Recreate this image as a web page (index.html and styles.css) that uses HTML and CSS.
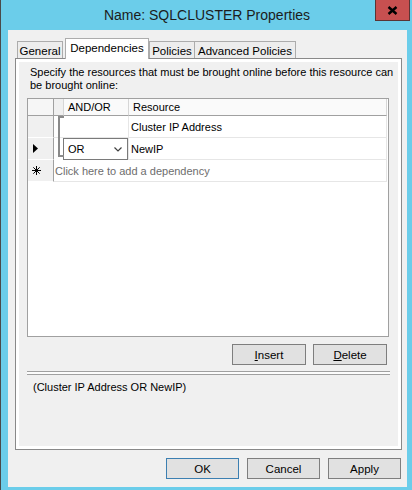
FILE: index.html
```html
<!DOCTYPE html>
<html>
<head>
<meta charset="utf-8">
<title>Name: SQLCLUSTER Properties</title>
<link rel="stylesheet" href="styles.css">
</head>
<body>
<div class="window">
  <div class="titlebar">
    <span class="title">Name: SQLCLUSTER Properties</span>
    <div class="close">
      <svg width="11" height="9" viewBox="0 0 11 9"><path d="M1.5 1 L9.5 8 M9.5 1 L1.5 8" stroke="#000" stroke-width="2.4" fill="none"/></svg>
    </div>
  </div>
  <div class="client">
    <div class="tabs">
      <div class="tab t-general">General</div>
      <div class="tab t-dep active">Dependencies</div>
      <div class="tab t-pol">Policies</div>
      <div class="tab t-adv">Advanced Policies</div>
    </div>
    <div class="panel">
      <p class="intro">Specify the resources that must be brought online before this resource can<br>be brought online:</p>
      <div class="grid">
        <div class="row head">
          <div class="rh"></div>
          <div class="hb"></div>
          <div class="c-andor">AND/OR</div>
          <div class="c-res">Resource</div>
        </div>
        <div class="row">
          <div class="rh"></div>
          <div class="c-merge"></div>
          <div class="c-res">Cluster IP Address</div>
        </div>
        <div class="row">
          <div class="rh"><svg width="6" height="9" viewBox="0 0 6 9"><path d="M0 0 L5 4.5 L0 9 Z" fill="#000"/></svg></div>
          <div class="c-merge nob">
            <div class="combo"><span>OR</span><svg width="8" height="5" viewBox="0 0 8 5"><path d="M0.5 0.5 L4 4 L7.5 0.5" stroke="#404040" stroke-width="1.2" fill="none"/></svg></div>
          </div>
          <div class="c-res">NewIP</div>
        </div>
        <div class="row">
          <div class="rh star"><svg width="9" height="9" viewBox="0 0 9 9"><path d="M4.5 0 V9 M0 4.5 H9 M1.3 1.3 L7.7 7.7 M7.7 1.3 L1.3 7.7" stroke="#000" stroke-width="1" fill="none"/></svg></div>
          <div class="c-new">Click here to add a dependency</div>
        </div>
        <div class="bracket"></div>
      </div>
      <div class="actions">
        <button class="btn"><u>I</u>nsert</button>
        <button class="btn"><u>D</u>elete</button>
      </div>
      <div class="sep"></div>
      <p class="desc">(Cluster IP Address OR NewIP)</p>
    </div>
    <div class="footer">
      <button class="btn default">OK</button>
      <button class="btn">Cancel</button>
      <button class="btn">Apply</button>
    </div>
  </div>
</div>
</body>
</html>
```
FILE: styles.css
```css
html, body {
  margin: 0;
  padding: 0;
}
body {
  width: 412px;
  height: 490px;
  overflow: hidden;
  background: #6bcdea;
  font-family: "Liberation Sans", Arial, sans-serif;
  font-size: 11px;
  color: #000;
}
.window {
  height: 490px;
  border-left: 1px solid #4a4a4a;
  box-sizing: border-box;
  position: relative;
}
.titlebar {
  height: 30px;
  display: flex;
  align-items: center;
  justify-content: center;
}
.title {
  font-size: 14px;
  color: #1c1c1c;
  margin-left: 1px;
}
.close {
  position: absolute;
  top: 0;
  right: 2px;
  width: 35px;
  height: 21px;
  box-sizing: border-box;
  background: #c75050;
  border: 1px solid #5a3434;
  border-top: none;
  display: flex;
  align-items: center;
  justify-content: center;
}
.client {
  margin-left: 7px;
  width: 399px;
  height: 457px;
  background: #f0f0f0;
  display: flex;
  flex-direction: column;
}
.tabs {
  height: 28px;
  display: flex;
  align-items: flex-end;
  padding-left: 9px;
  position: relative;
  z-index: 1;
  box-sizing: border-box;
}
.tab {
  height: 17px;
  box-sizing: border-box;
  border: 1px solid #acacac;
  border-bottom: none;
  background: #ededed;
  display: flex;
  align-items: center;
  justify-content: center;
  padding-top: 1px;
  font-size: 11.5px;
}
.t-general { width: 46px; margin-right: 2px; }
.t-dep { width: 84px; }
.t-pol { width: 46px; }
.t-adv { width: 101px; border-left: none; }
.tab.active {
  height: 21px;
  margin-bottom: -1px;
  background: #fff;
  border-color: #acacac;
  padding-top: 0;
  padding-bottom: 2px;
}
.panel {
  margin-left: 7px;
  width: 387px;
  height: 392px;
  box-sizing: border-box;
  border: 1px solid #898989;
  box-shadow: inset 0 0 0 3px #fff;
  background: #f0f0f0;
  padding: 7px 12px 0 11px;
  display: flex;
  flex-direction: column;
}
.intro {
  margin: 0;
  padding-left: 3px;
  line-height: 13px;
  white-space: nowrap;
}
.grid {
  margin-top: 6px;
  height: 239px;
  box-sizing: border-box;
  border: 1px solid #a0a0a0;
  background: #fff;
  position: relative;
}
.row {
  display: flex;
  height: 22px;
}
.row.head {
  height: 17px;
}
.row > div {
  box-sizing: border-box;
  display: flex;
  align-items: center;
}
.rh {
  width: 26px;
  flex: none;
  background: #f0f0f0;
  border-right: 1px solid #a0a0a0;
  border-bottom: 1px solid #fff;
  padding-left: 5px;
}
.rh.star {
  padding-left: 4px;
}
.head > div {
  background: #fafafa;
  border-bottom: 1px solid #a0a0a0;
}
.head .rh {
  background: #f6f6f6;
}
.hb {
  width: 10px;
  flex: none;
  border-right: 1px solid #d6d6d6;
  background: #f0f0f0 !important;
}
.c-andor {
  width: 65px;
  flex: none;
  border-right: 1px solid #d6d6d6;
  padding-left: 4px;
}
.c-res {
  flex: 1;
  margin-right: 1px;
  border-right: 1px solid #e6e6e6;
  border-bottom: 1px solid #e6e6e6;
  padding-left: 2px;
}
.head .c-res {
  padding-left: 4px;
  border-right-color: #d6d6d6;
}
.c-merge {
  width: 75px;
  flex: none;
  border-right: 1px solid #e6e6e6;
  border-bottom: 1px solid #e6e6e6;
  padding-left: 9px;
}
.c-merge.nob {
  border-bottom: none;
  align-items: stretch !important;
}
.combo {
  width: 65px;
  height: 22px;
  box-sizing: border-box;
  border: 1px solid #7a7a7a;
  background: #fff;
  display: flex;
  align-items: center;
  justify-content: space-between;
  padding: 0 5px 0 4px;
}
.combo svg {
  margin-top: 1px;
}
.c-new {
  flex: 1;
  margin-right: 1px;
  border-right: 1px solid #e6e6e6;
  border-bottom: 1px solid #e6e6e6;
  padding-left: 1px;
  color: #6d6d6d;
}
.bracket {
  position: absolute;
  left: 30px;
  top: 17px;
  width: 6px;
  height: 41px;
  box-sizing: border-box;
  border: 2px solid #8a8a8a;
  border-right: none;
}
.actions {
  display: flex;
  justify-content: flex-end;
  gap: 7px;
  margin-top: 7px;
  padding-right: 2px;
}
.btn {
  width: 74px;
  height: 21px;
  box-sizing: border-box;
  margin: 0;
  padding: 0;
  background: #e1e1e1;
  border: 1px solid #7e7e7e;
  font-family: "Liberation Sans", Arial, sans-serif;
  font-size: 11.5px;
  color: #000;
}
.btn u {
  text-decoration-thickness: 1px;
}
.sep {
  margin-top: 6px;
  margin-right: -1px;
  height: 4px;
  box-sizing: border-box;
  border-top: 1px solid #a0a0a0;
  border-bottom: 1px solid #a0a0a0;
  background: #fcfcfc;
}
.desc {
  margin: 6px 0 0;
  padding-left: 6px;
  line-height: 13px;
}
.footer {
  display: flex;
  justify-content: flex-end;
  gap: 8px;
  padding: 8px 6px 0 0;
}
.footer .btn {
  width: 73px;
}
.btn.default {
  border-color: #3c7fb1;
}
```
